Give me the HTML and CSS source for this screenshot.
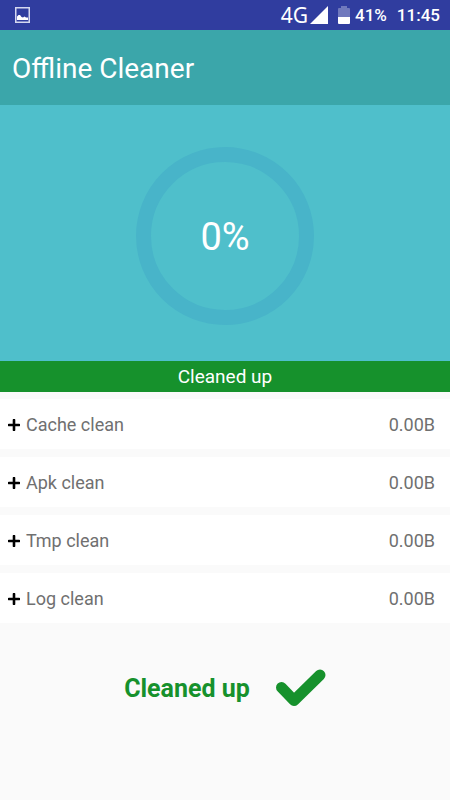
FILE: index.html
```html
<!DOCTYPE html>
<html lang="en">
<head>
    <meta charset="UTF-8">
    <meta name="viewport" content="width=device-width, initial-scale=1.0">
    <title>Offline Cleaner</title>
    <link rel="stylesheet" href="styles.css">
</head>
<body>
    <div class="status-bar">
        <svg class="picture-icon" viewBox="0 0 15 16" aria-hidden="true">
            <rect x="0.75" y="0.75" width="13.5" height="14.5" fill="none" stroke="#d5d8f0" stroke-width="1.5"/>
            <path d="M2 13V9.5L3.5 8L5 8L6.5 10L8 10.5L9.5 9.5L11 10.5L13 10.5V13Z" fill="#fff"/>
        </svg>
        <div class="status-info">
            <span class="network">4G</span>
            <svg class="signal-icon" viewBox="0 0 18 18" aria-hidden="true">
                <path d="M18 0V18H0Z" fill="#fff"/>
            </svg>
            <svg class="battery-icon" viewBox="0 0 12 18" aria-hidden="true">
                <path d="M3 0H9V2H11Q12 2 12 3V11H0V3Q0 2 1 2H3Z" fill="#7079bd"/>
                <path d="M0 11H12V17Q12 18 11 18H1Q0 18 0 17Z" fill="#fff"/>
            </svg>
            <span class="battery-level">41%</span>
            <span class="clock">11:45</span>
        </div>
    </div>

    <header class="header">
        <h1>Offline Cleaner</h1>
    </header>

    <main>
        <div class="progress">
            <div class="progress-ring">0%</div>
        </div>

        <p class="banner">Cleaned up</p>

        <ul class="clean-list">
            <li>
                <button type="button" class="clean-item">
                    <svg class="plus-icon" viewBox="0 0 12 12" aria-hidden="true"><path d="M6 1V11M1 6H11"/></svg>
                    <span class="clean-name">Cache clean</span>
                    <span>0.00B</span>
                </button>
            </li>
            <li>
                <button type="button" class="clean-item">
                    <svg class="plus-icon" viewBox="0 0 12 12" aria-hidden="true"><path d="M6 1V11M1 6H11"/></svg>
                    <span class="clean-name">Apk clean</span>
                    <span>0.00B</span>
                </button>
            </li>
            <li>
                <button type="button" class="clean-item">
                    <svg class="plus-icon" viewBox="0 0 12 12" aria-hidden="true"><path d="M6 1V11M1 6H11"/></svg>
                    <span class="clean-name">Tmp clean</span>
                    <span>0.00B</span>
                </button>
            </li>
            <li>
                <button type="button" class="clean-item">
                    <svg class="plus-icon" viewBox="0 0 12 12" aria-hidden="true"><path d="M6 1V11M1 6H11"/></svg>
                    <span class="clean-name">Log clean</span>
                    <span>0.00B</span>
                </button>
            </li>
        </ul>

        <div class="result">
            <span>Cleaned up</span>
            <svg class="check-icon" viewBox="0 0 50 38" aria-hidden="true">
                <path d="M5.5 18.5L18 31.5L44 6"/>
            </svg>
        </div>
    </main>
</body>
</html>
```

FILE: styles.css
```css
:root {
    --status: #303d9f;
    --header: #3ba6aa;
    --teal: #4fbfcb;
    --ring: #48b4c9;
    --green: #16912c;
    --text: #707070;
    --white: #ffffff;
    --background: #fafafa;
}

* {
    margin: 0;
    padding: 0;
    box-sizing: border-box;
}

body {
    background-color: var(--background);
    color: var(--text);
    font-family: Roboto, sans-serif;
    font-size: 18px;
}

svg {
    display: block;
    flex: none;
}

.status-bar {
    display: flex;
    justify-content: space-between;
    align-items: center;
    height: 30px;
    padding: 0 10px 0 15px;
    background-color: var(--status);
    color: var(--white);
}

.picture-icon {
    width: 15px;
    height: 16px;
}

.status-info {
    display: flex;
    align-items: center;
    font-size: 17px;
    font-weight: 500;
}

.network {
    font-family: "Noto Sans", sans-serif;
    font-size: 21px;
    font-weight: 400;
    line-height: 30px;
}

.signal-icon {
    width: 18px;
    height: 18px;
    margin: 0 10px 0 2px;
}

.battery-icon {
    width: 12px;
    height: 18px;
    margin-right: 5px;
}

.clock {
    margin-left: 10px;
}

.header {
    display: flex;
    align-items: center;
    height: 75px;
    padding: 2px 12px 0;
    background-color: var(--header);
    color: var(--white);
}

.header h1 {
    font-size: 28px;
    font-weight: 400;
}

.progress {
    display: flex;
    justify-content: center;
    padding: 42px 0 36px;
    background-color: var(--teal);
}

.progress-ring {
    display: flex;
    justify-content: center;
    align-items: center;
    width: 178px;
    height: 178px;
    padding-top: 2px;
    border: 15px solid var(--ring);
    border-radius: 50%;
    color: var(--white);
    font-size: 38px;
}

.banner {
    padding-top: 1px;
    background-color: var(--green);
    color: var(--white);
    font-size: 19px;
    line-height: 30px;
    text-align: center;
}

.clean-list {
    display: grid;
    gap: 8px;
    padding-top: 7px;
    list-style: none;
}

.clean-item {
    display: flex;
    align-items: center;
    width: 100%;
    height: 50px;
    padding: 1px 15px 0 8px;
    border: none;
    background-color: var(--white);
    color: var(--text);
    font: inherit;
    text-align: left;
    cursor: pointer;
}

.plus-icon {
    width: 12px;
    height: 12px;
    margin-right: 6px;
    fill: none;
    stroke: #000000;
    stroke-width: 2.6;
    stroke-linecap: round;
}

.clean-name {
    flex: 1;
}

.result {
    display: flex;
    justify-content: center;
    align-items: center;
    gap: 26px;
    padding: 46px 0;
    color: var(--green);
    font-size: 25px;
    font-weight: 700;
}

.check-icon {
    width: 50px;
    height: 38px;
    fill: none;
    stroke: var(--green);
    stroke-width: 11;
    stroke-linecap: round;
    stroke-linejoin: round;
}
```
